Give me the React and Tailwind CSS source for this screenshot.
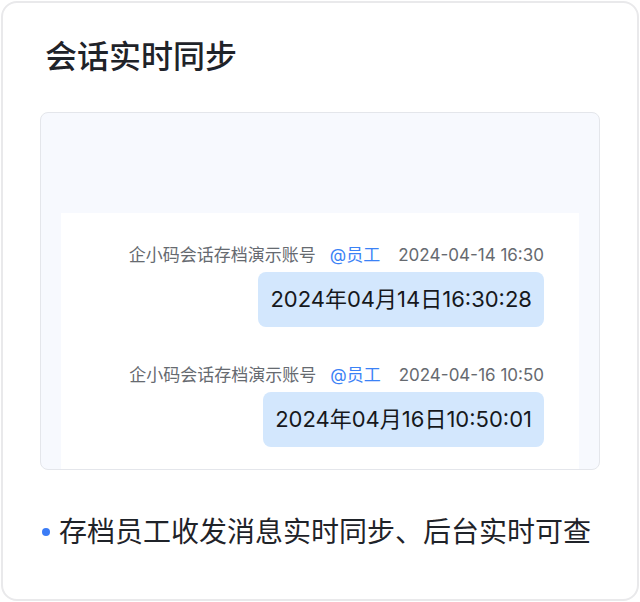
import React from "react";

const FONT = { fontFamily: 'Inter, "Noto Sans CJK SC", sans-serif' };

const msgs = [
  { time: "2024-04-14 16:30", text: "2024年04月14日16:30:28" },
  { time: "2024-04-16 10:50", text: "2024年04月16日10:50:01" },
];

function Message({ m, first }) {
  return (
    <div className={"flex flex-col items-end " + (first ? "" : "mt-[37px]")}>
      <div className="flex items-center h-6 text-[17px] text-[#666a70]">
        <span>企小码会话存档演示账号</span>
        <span className="ml-[14px] text-[#3b82f6]">@员工</span>
        <span className="ml-[18px]">{m.time}</span>
      </div>
      <div className="mt-1 h-[55px] flex items-center px-3 rounded-lg bg-[#d3e7fd] text-[22px] text-[#16181c]">
        {m.text}
      </div>
    </div>
  );
}

export default function App() {
  return (
    <div className="w-[640px] h-[602px] bg-white p-px" style={FONT}>
      <div className="h-full rounded-[16px] border-2 border-[#e9e9eb] bg-white flex flex-col pl-[37px] pr-[37px]">
        <h1 className="mt-[34px] ml-[5px] h-10 leading-10 text-[32px] font-medium text-[#1f2329]">会话实时同步</h1>
        <div className="mt-[35px] h-[358px] rounded-lg border border-[#e4e6eb] bg-[#f7f9fe] px-5 pt-[100px] overflow-hidden">
          <div className="h-full bg-white pt-[31px] pr-[35px]">
            {msgs.map((m, i) => <Message key={i} m={m} first={i === 0} />)}
          </div>
        </div>
        <div className="mt-[44px] flex items-center h-9">
          <span className="w-2 h-2 rounded-full bg-[#3b7cf6] ml-[2px]"></span>
          <span className="ml-[9px] text-[28px] text-[#1f2329] leading-9">存档员工收发消息实时同步、后台实时可查</span>
        </div>
      </div>
    </div>
  );
}
